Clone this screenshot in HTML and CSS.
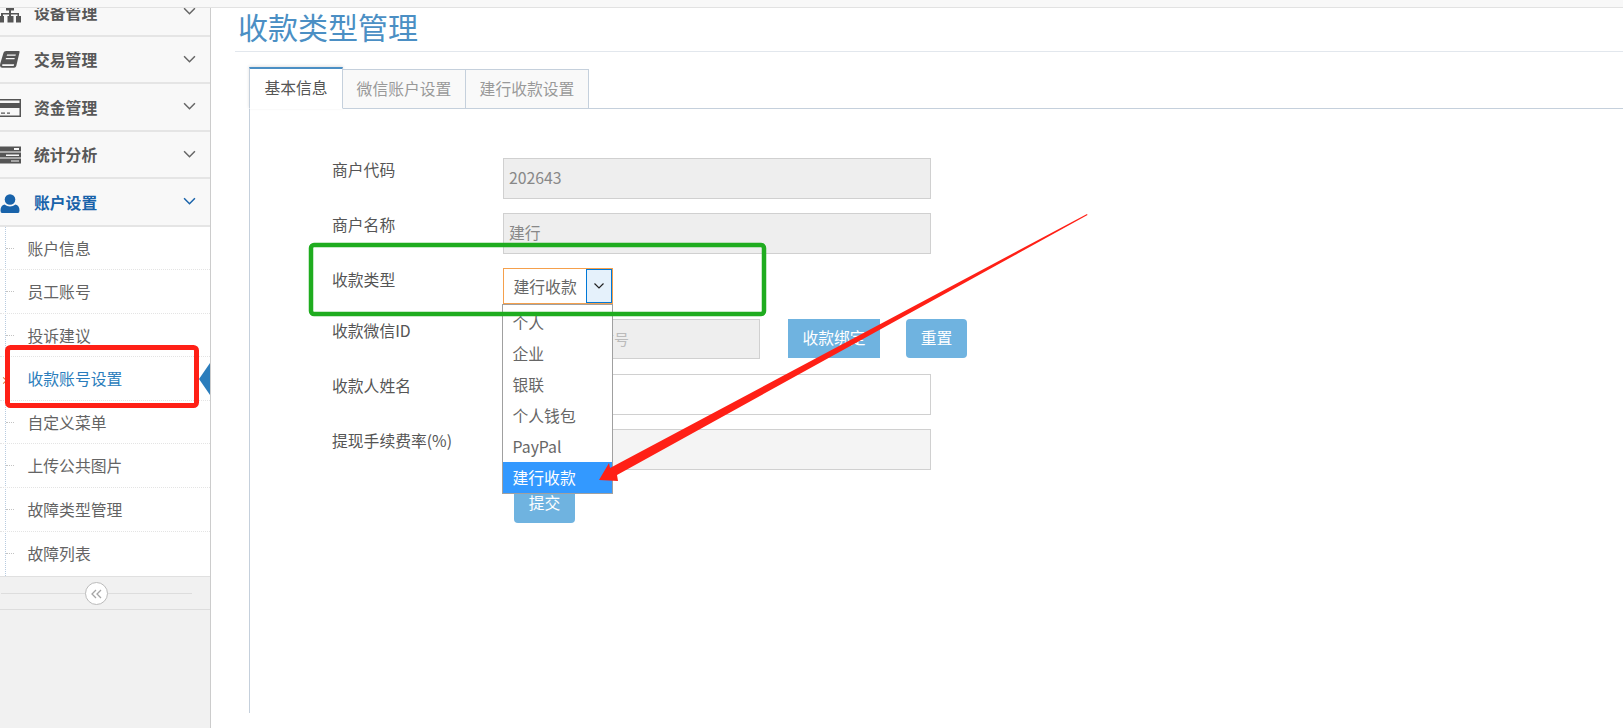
FILE: index.html
```html
<!DOCTYPE html>
<html lang="zh-CN">
<head>
<meta charset="utf-8">
<title>收款类型管理</title>
<link rel="stylesheet" href="styles.css">
</head>
<body>
<div class="topbar"></div>
<div class="layout">
  <aside class="sidebar">
    <ul class="menu">
      <li class="menu-item">
        <svg class="menu-icon" viewBox="0 0 24 20"><path d="M6 5.500h8v3h-3V11h8v3h2v6.500h-5V14h1.500v-1.500H11V14h2.500v6.500h-6V14H9v-1.500H3V14h1v6.500h-6V14h3V11h8V8.500H6z"/></svg>
        <span class="menu-text">设备管理</span>
        <svg class="menu-caret" viewBox="0 0 12 8"><path d="M1 1l5 5 5-5"/></svg>
      </li>
      <li class="menu-item">
        <svg class="menu-icon" viewBox="0 0 24 20"><path transform="translate(0 2) scale(.88)" d="M7 0h14.500q1 0 .7 1.500L18.500 17q-.5 2-2.500 2H2.500Q0 19 0 16.500q0-1 .4-2.500L4 2q.5-2 3-2zM8 4l-.4 1.500h10L18 4zM6.800 8l-.4 1.500h10L16.800 8zM3.300 15q-1 0-1 1t1 1h12.200l.6-2z"/></svg>
        <span class="menu-text">交易管理</span>
        <svg class="menu-caret" viewBox="0 0 12 8"><path d="M1 1l5 5 5-5"/></svg>
      </li>
      <li class="menu-item">
        <svg class="menu-icon" viewBox="0 0 24 20"><path fill-rule="evenodd" d="M-3 2h24v18H-3zM-2 3.500V6h21.500V3.500zM-2 11v7.500h21.500V11zM1 15.500h4v1.200H1zM7 15.500h3v1.200H7z"/></svg>
        <span class="menu-text">资金管理</span>
        <svg class="menu-caret" viewBox="0 0 12 8"><path d="M1 1l5 5 5-5"/></svg>
      </li>
      <li class="menu-item">
        <svg class="menu-icon" viewBox="0 0 24 20"><path d="M-3 2.500h24v5H-3zM-3 8.500h24v5H-3zM-3 14.500h24v5H-3z"/><path class="icon-cut" d="M14 4h5v2h-5zM6 10.500h13V12H6zM11 16.500h8v1h-8z"/></svg>
        <span class="menu-text">统计分析</span>
        <svg class="menu-caret" viewBox="0 0 12 8"><path d="M1 1l5 5 5-5"/></svg>
      </li>
      <li class="menu-item menu-item-open">
        <svg class="menu-icon" viewBox="0 0 24 20"><circle cx="10" cy="7.500" r="5.300"/><path d="M2 21q-1.500 0-1.500-2.500 0-5 4-6 2.500 2 5.500 2t5.500-2q4 1 4 6 0 2.500-1.500 2.500z"/></svg>
        <span class="menu-text">账户设置</span>
        <svg class="menu-caret" viewBox="0 0 12 8"><path d="M1 1l5 5 5-5"/></svg>
      </li>
    </ul>
    <ul class="submenu">
      <li class="sub-item">账户信息</li>
      <li class="sub-item">员工账号</li>
      <li class="sub-item">投诉建议</li>
      <li class="sub-item sub-item-active">收款账号设置</li>
      <li class="sub-item">自定义菜单</li>
      <li class="sub-item">上传公共图片</li>
      <li class="sub-item">故障类型管理</li>
      <li class="sub-item">故障列表</li>
    </ul>
    <div class="collapse-bar">
      <span class="collapse-btn"><svg viewBox="0 0 11 10"><path d="M5 1L1 5l4 4M10 1L6 5l4 4"/></svg></span>
    </div>
  </aside>
  <main class="content">
    <h1 class="page-title">收款类型管理</h1>
    <div class="tabs">
      <div class="tab tab-active">基本信息</div>
      <div class="tab">微信账户设置</div>
      <div class="tab">建行收款设置</div>
    </div>
    <div class="pane">
      <form class="form">
        <div class="row">
          <label class="label">商户代码</label>
          <input class="field field-off" value="202643" readonly>
        </div>
        <div class="row">
          <label class="label">商户名称</label>
          <input class="field field-off" value="建行" readonly>
        </div>
        <div class="row row-select">
          <label class="label">收款类型</label>
          <div class="select">
            <span class="select-value">建行收款</span>
            <span class="select-btn"><svg viewBox="0 0 12 8"><path d="M1.500 1.500L6 6l4.500-4.500"/></svg></span>
            <ul class="options">
              <li class="option">个人</li>
              <li class="option">企业</li>
              <li class="option">银联</li>
              <li class="option">个人钱包</li>
              <li class="option">PayPal</li>
              <li class="option option-on">建行收款</li>
            </ul>
          </div>
        </div>
        <div class="row row-bind">
          <label class="label">收款微信ID</label>
          <input class="field field-off field-short" placeholder="请输入收款微信号" readonly>
          <button class="btn btn-square" type="button">收款绑定</button>
          <button class="btn btn-reset" type="button">重置</button>
        </div>
        <div class="row">
          <label class="label">收款人姓名</label>
          <input class="field">
        </div>
        <div class="row">
          <label class="label">提现手续费率(%)</label>
          <input class="field field-light" readonly>
        </div>
        <div class="row row-submit">
          <button class="btn btn-submit" type="button">提交</button>
        </div>
      </form>
    </div>
  </main>
</div>
<svg class="marks" viewBox="0 0 1623 728">
  <rect class="mark-red" x="7.500" y="347.500" width="189" height="58" rx="3"/>
  <rect class="mark-green" x="311" y="245" width="453" height="69" rx="3"/>
  <polygon class="mark-arrow" points="1087,214 1087.500,215 617,475 618,481 599,480 609,463 610,468"/>
</svg>
</body>
</html>
```
FILE: styles.css
```css
* { box-sizing: border-box; }
html { overflow: hidden; }
html, body { margin: 0; height: 728px; }
body {
  position: relative;
  width: 1623px;
  overflow: hidden;
  background: #fff;
  font-family: "Noto Sans CJK SC", "Noto Sans", sans-serif;
  font-size: 15.800px;
  color: #555;
}
ul { margin: 0; padding: 0; list-style: none; }

.topbar { height: 8px; background: #f8f8f8; border-bottom: 1px solid #e2e2e2; }
.layout { display: flex; height: 720px; }

/* sidebar */
.sidebar {
  position: relative;
  flex: 0 0 211px;
  overflow: hidden;
  background: #f1f1f1;
  border-right: 1px solid #ccc;
}
.menu { margin-top: -19px; }
.menu-item {
  display: flex;
  align-items: center;
  height: 47.500px;
  padding-right: 14px;
  background: #f8f8f8;
  border-bottom: 2px solid #e5e5e5;
  color: #585858;
}
.menu-icon { flex: none; width: 24px; height: 20px; overflow: visible; fill: #555; }
.icon-cut { fill: #f8f8f8; }
.menu-text { flex: 1; margin-left: 10px; padding-top: 2px; font-weight: 700; line-height: 24px; }
.menu-caret { flex: none; width: 13px; height: 9px; fill: none; stroke: #666; stroke-width: 1.400; }
.menu-item-open { color: #1963aa; }
.menu-item-open .menu-icon { fill: #1963aa; }
.menu-item-open .menu-caret { stroke: #1963aa; }

.submenu {
  position: relative;
  height: 349.500px;
  background: #fff;
}
.submenu::before {
  content: "";
  position: absolute;
  left: 5px;
  top: 0;
  bottom: 0;
  border-left: 1px dotted #b7cbe0;
}
.sub-item {
  position: relative;
  height: 43.600px;
  padding-left: 27.500px;
  line-height: 44px;
  color: #646464;
  border-bottom: 1px dotted #e4e4e4;
}
.sub-item:last-child { border-bottom: 0; }
.sub-item::before {
  content: "";
  position: absolute;
  left: 6px;
  top: 21px;
  width: 8px;
  border-top: 1px dotted #c3c3c3;
}
.sub-item-active { color: #2b7dbc; }
.sub-item-active::before {
  left: 1px;
  top: 21px;
  width: 4px;
  height: 4px;
  border-top: 1px solid #d9773a;
  border-right: 1px solid #d9773a;
  transform: rotate(45deg);
}
.sub-item-active::after {
  content: "";
  position: absolute;
  right: 0;
  top: 6px;
  border: 16px solid transparent;
  border-left-width: 0;
  border-right: 11px solid #2b7dbc;
}
.collapse-bar {
  position: relative;
  height: 34px;
  background: #f1f1f1;
  border-top: 1px solid #e0e0e0;
  border-bottom: 1px solid #ddd;
}
.collapse-bar::before {
  content: "";
  position: absolute;
  left: 1px;
  right: 18px;
  top: 16px;
  border-top: 1px solid #ddd;
}
.collapse-btn {
  position: absolute;
  left: 85px;
  top: 5px;
  display: flex;
  align-items: center;
  justify-content: center;
  width: 23px;
  height: 23px;
  border: 1px solid #bbb;
  border-radius: 50%;
  background: #fff;
}
.collapse-btn svg { width: 11px; height: 10px; fill: none; stroke: #a5a5a5; stroke-width: 1.300; }

/* content */
.content { flex: 1; min-width: 0; padding-left: 24px; }
.page-title {
  margin: 0;
  height: 44px;
  padding-left: 3px;
  border-bottom: 1px solid #e2e7ed;
  color: #4b8fc4;
  font-size: 30px;
  font-weight: 400;
  line-height: 37px;
}
.tabs {
  display: flex;
  align-items: flex-end;
  height: 42px;
  margin: 15px 0 0 14px;
  border-bottom: 1px solid #c5d0dc;
}
.tab {
  width: 123px;
  height: 40px;
  margin-bottom: -1px;
  border: 1px solid #c5d0dc;
  border-left-width: 0;
  background: #f9f9f9;
  color: #999;
  line-height: 38px;
  text-align: center;
  white-space: nowrap;
}
.tab-active {
  width: 94px;
  height: 42px;
  border-top: 2px solid #4b8fc4;
  border-left: 1px solid #c5d0dc;
  border-bottom-color: #fff;
  background: #fff;
  color: #555;
  box-shadow: 0 -1px 3px rgba(0, 0, 0, .12);
}
.pane {
  height: 604px;
  margin-left: 14px;
  border-left: 1px solid #c5d0dc;
}
.form { padding: 49px 0 0 82px; }
.row { display: flex; align-items: flex-start; margin-bottom: 14px; }
.row-select { margin-bottom: 15px; }
.row-bind { margin-bottom: 15px; }
.row-submit { padding-left: 182px; }
.label { flex: 0 0 171px; line-height: 23px; color: #555; white-space: nowrap; }
.field {
  flex: none;
  width: 428px;
  height: 41px;
  padding: 0 5px 2px;
  border: 1px solid #d0d0d0;
  border-radius: 0;
  outline: 0;
  background: #fff;
  font: inherit;
  color: #888;
}
.field-off { background: #eee; }
.field-light { background: #f4f4f4; }
.field-short { width: 257px; height: 40px; }
.field::placeholder { color: #bbb; font-size: 15px; }

.select {
  position: relative;
  display: flex;
  width: 110px;
  height: 36px;
  border: 1px solid #f5a04c;
  background: #fff;
}
.select-value { flex: 1; padding: 3px 0 0 9.500px; line-height: 30px; color: #666; white-space: nowrap; }
.select-btn {
  flex: none;
  display: flex;
  align-items: center;
  justify-content: center;
  width: 26px;
  border: 1px solid #0078d7;
  background: #e5f1fb;
}
.select-btn svg { width: 12px; height: 8px; fill: none; stroke: #222; stroke-width: 1.200; }
.options {
  position: absolute;
  z-index: 2;
  left: -2px;
  right: -1px;
  top: 35px;
  height: 190px;
  padding-top: 2px;
  border: 1px solid #a0a0a0;
  background: #fff;
}
.option { height: 31px; padding-left: 9.500px; line-height: 31px; color: #666; }
.option-on { background: #3399ff; color: #fff; }

.btn {
  flex: none;
  height: 39px;
  padding: 0 0 3px;
  border: 0;
  background: #6fb3e0;
  color: #fff;
  font: inherit;
}
.btn-square { width: 92px; margin-left: 28px; }
.btn-reset { width: 61px; margin-left: 26px; border-radius: 4px; }
.btn-submit { width: 61px; border-radius: 4px; }

/* annotations drawn over the screenshot */
.marks { position: absolute; left: 0; top: 0; width: 1623px; height: 728px; z-index: 5; pointer-events: none; }
.mark-red { fill: none; stroke: #ff2016; stroke-width: 5; }
.mark-green { fill: none; stroke: #1fac1f; stroke-width: 4.500; }
.mark-arrow { fill: #ff2016; }
```
